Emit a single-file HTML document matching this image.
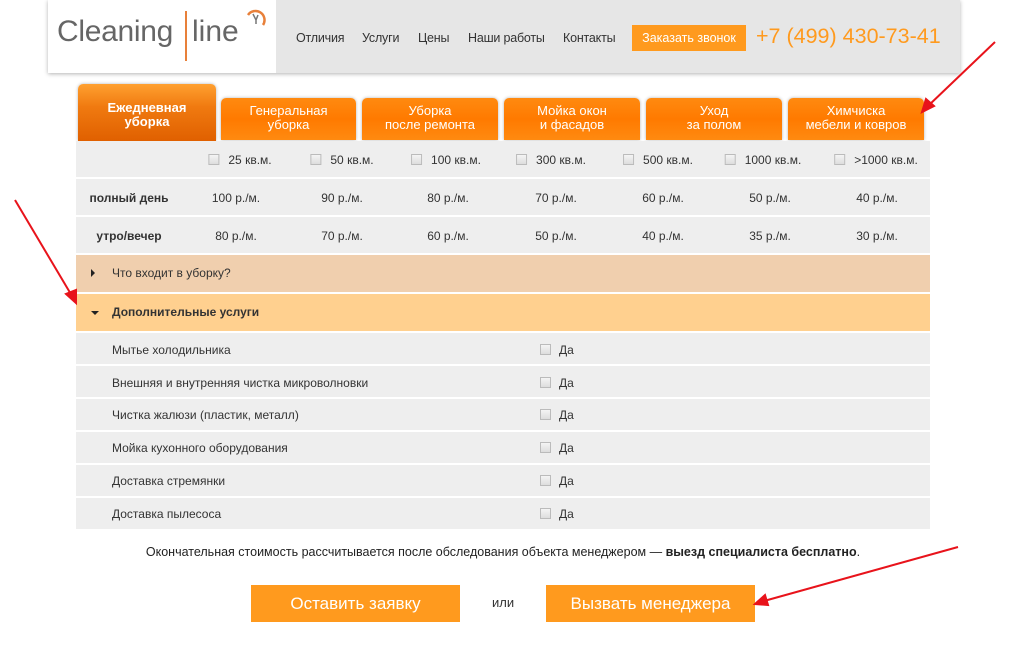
<!DOCTYPE html>
<html><head><meta charset="utf-8"><style>
*{margin:0;padding:0;box-sizing:border-box}
body{width:1024px;height:648px;background:#fff;font-family:"Liberation Sans","DejaVu Sans",sans-serif;position:relative;overflow:hidden;color:#333}
.abs{position:absolute}
.hdr{left:48px;top:0;width:912px;height:73px;background:#e6e6e6;box-shadow:0 1px 4px rgba(0,0,0,.3)}
.logo{left:48px;top:0;width:228px;height:73px;background:#fff}
.nav{top:31px;font-size:12.5px;color:#333;letter-spacing:-0.2px}
.tab{border-radius:5px 5px 0 0;color:#fff;text-align:center;font-size:13px;line-height:14px;background:linear-gradient(#ff8a10,#ff7a00 50%,#ff8a10);box-shadow:0 0 3px rgba(0,0,0,.3)}
.row{left:76px;width:854px;background:#eee}
.c{position:absolute;font-size:12px;color:#333;transform:translateX(-50%);white-space:nowrap}
.cb{display:inline-block;width:11px;height:11px;border:1px solid #bbb;background:linear-gradient(#f4f4f4,#ddd);vertical-align:-1px;margin-right:9px}
.svc{font-size:12px;color:#333;position:absolute;left:112px}
.btn{background:#ff9a1e;color:#fff;font-size:17px;text-align:center;line-height:37px;height:37px;top:585px}
</style></head><body>
<div class="abs hdr"></div>
<div class="abs logo"></div>
<div class="abs" style="left:57px;top:15px;font-size:30px;color:#666;letter-spacing:-0.3px">Cleaning</div>
<div class="abs" style="left:185px;top:11px;width:2px;height:50px;background:#e8803a"></div>
<div class="abs" style="left:192px;top:15px;font-size:30px;color:#666">line</div>
<svg class="abs" style="left:244px;top:9px" width="24" height="24"><path d="M4 6 A9 9 0 0 1 19 16" stroke="#e8803a" stroke-width="2.5" fill="none"/><path d="M9 5 l3 6 l2-5 M12 11 v4" stroke="#777" stroke-width="1.5" fill="none"/></svg>
<div class="abs nav" style="left:296px">Отличия</div>
<div class="abs nav" style="left:362px">Услуги</div>
<div class="abs nav" style="left:418px">Цены</div>
<div class="abs nav" style="left:468px">Наши работы</div>
<div class="abs nav" style="left:563px">Контакты</div>
<div class="abs" style="left:632px;top:25px;width:114px;height:26px;background:#ff9a1e;color:#fff;font-size:12.5px;line-height:26px;text-align:center">Заказать звонок</div>
<div class="abs" style="left:756px;top:24px;font-size:21.5px;color:#ff9a1e">+7 (499) 430-73-41</div>

<div class="abs tab" style="left:78px;top:84px;width:138px;height:57px;padding-top:17px;font-weight:bold;background:linear-gradient(#ffa030,#f07a10 40%,#e06000)">Ежедневная<br>уборка</div>
<div class="abs tab" style="left:221px;top:98px;width:135px;height:42px;padding-top:6px">Генеральная<br>уборка</div>
<div class="abs tab" style="left:362px;top:98px;width:136px;height:42px;padding-top:6px">Уборка<br>после ремонта</div>
<div class="abs tab" style="left:504px;top:98px;width:136px;height:42px;padding-top:6px">Мойка окон<br>и фасадов</div>
<div class="abs tab" style="left:646px;top:98px;width:136px;height:42px;padding-top:6px">Уход<br>за полом</div>
<div class="abs tab" style="left:788px;top:98px;width:136px;height:42px;padding-top:6px">Химчиска<br>мебели и ковров</div>

<div class="abs row" style="top:141px;height:36px"></div>
<div class="abs row" style="top:179px;height:36px"></div>
<div class="abs row" style="top:217px;height:36px"></div>
<div class="c" style="left:240px;top:153px"><span class="cb"></span>25 кв.м.</div>
<div class="c" style="left:342px;top:153px"><span class="cb"></span>50 кв.м.</div>
<div class="c" style="left:446px;top:153px"><span class="cb"></span>100 кв.м.</div>
<div class="c" style="left:551px;top:153px"><span class="cb"></span>300 кв.м.</div>
<div class="c" style="left:658px;top:153px"><span class="cb"></span>500 кв.м.</div>
<div class="c" style="left:763px;top:153px"><span class="cb"></span>1000 кв.м.</div>
<div class="c" style="left:876px;top:153px"><span class="cb"></span>&gt;1000 кв.м.</div>
<div class="c" style="left:129px;top:191px;font-weight:bold">полный день</div>
<div class="c" style="left:129px;top:229px;font-weight:bold">утро/вечер</div>
<div class="c" style="left:236px;top:191px">100 р./м.</div><div class="c" style="left:342px;top:191px">90 р./м.</div><div class="c" style="left:448px;top:191px">80 р./м.</div><div class="c" style="left:556px;top:191px">70 р./м.</div><div class="c" style="left:663px;top:191px">60 р./м.</div><div class="c" style="left:770px;top:191px">50 р./м.</div><div class="c" style="left:877px;top:191px">40 р./м.</div>
<div class="c" style="left:236px;top:229px">80 р./м.</div><div class="c" style="left:342px;top:229px">70 р./м.</div><div class="c" style="left:448px;top:229px">60 р./м.</div><div class="c" style="left:556px;top:229px">50 р./м.</div><div class="c" style="left:663px;top:229px">40 р./м.</div><div class="c" style="left:770px;top:229px">35 р./м.</div><div class="c" style="left:877px;top:229px">30 р./м.</div>

<div class="abs row" style="top:255px;height:37px;background:#f0cfae"></div>
<div class="abs" style="left:91px;top:269px;width:0;height:0;border-left:4px solid #222;border-top:4px solid transparent;border-bottom:4px solid transparent"></div>
<div class="svc" style="top:266px">Что входит в уборку?</div>
<div class="abs row" style="top:294px;height:37px;background:#ffd08f"></div>
<div class="abs" style="left:91px;top:311px;width:0;height:0;border-top:4px solid #222;border-left:4px solid transparent;border-right:4px solid transparent"></div>
<div class="svc" style="top:305px;font-weight:bold">Дополнительные услуги</div>

<div class="abs row" style="top:333px;height:31px"></div>
<div class="abs row" style="top:366px;height:31px"></div>
<div class="abs row" style="top:399px;height:31px"></div>
<div class="abs row" style="top:432px;height:31px"></div>
<div class="abs row" style="top:465px;height:31px"></div>
<div class="abs row" style="top:498px;height:31px"></div>
<div class="svc" style="top:343px">Мытье холодильника</div>
<div class="svc" style="top:376px">Внешняя и внутренняя чистка микроволновки</div>
<div class="svc" style="top:408px">Чистка жалюзи (пластик, металл)</div>
<div class="svc" style="top:441px">Мойка кухонного оборудования</div>
<div class="svc" style="top:474px">Доставка стремянки</div>
<div class="svc" style="top:507px">Доставка пылесоса</div>
<div class="svc" style="left:540px;top:343px"><span class="cb" style="margin-right:8px"></span>Да</div>
<div class="svc" style="left:540px;top:376px"><span class="cb" style="margin-right:8px"></span>Да</div>
<div class="svc" style="left:540px;top:408px"><span class="cb" style="margin-right:8px"></span>Да</div>
<div class="svc" style="left:540px;top:441px"><span class="cb" style="margin-right:8px"></span>Да</div>
<div class="svc" style="left:540px;top:474px"><span class="cb" style="margin-right:8px"></span>Да</div>
<div class="svc" style="left:540px;top:507px"><span class="cb" style="margin-right:8px"></span>Да</div>

<div class="abs" style="left:0;width:1006px;top:545px;text-align:center;font-size:12.5px;color:#222">Окончательная стоимость рассчитывается после обследования объекта менеджером — <b>выезд специалиста бесплатно</b>.</div>
<div class="abs btn" style="left:251px;width:209px">Оставить заявку</div>
<div class="abs" style="left:492px;top:595px;font-size:13px;color:#333">или</div>
<div class="abs btn" style="left:546px;width:209px">Вызвать менеджера</div>

<svg class="abs" style="left:0;top:0" width="1024" height="648">
<g stroke="#e8131b" stroke-width="2" fill="#e8131b">
<line x1="995" y1="42" x2="928" y2="106"/><polygon points="922,112 926,99 934,106"/>
<line x1="15" y1="200" x2="72" y2="296"/><polygon points="76,303 66,294 76,290"/>
<line x1="958" y1="547" x2="764" y2="601"/><polygon points="755,604 765,595 768,605"/>
</g></svg>
</body></html>
